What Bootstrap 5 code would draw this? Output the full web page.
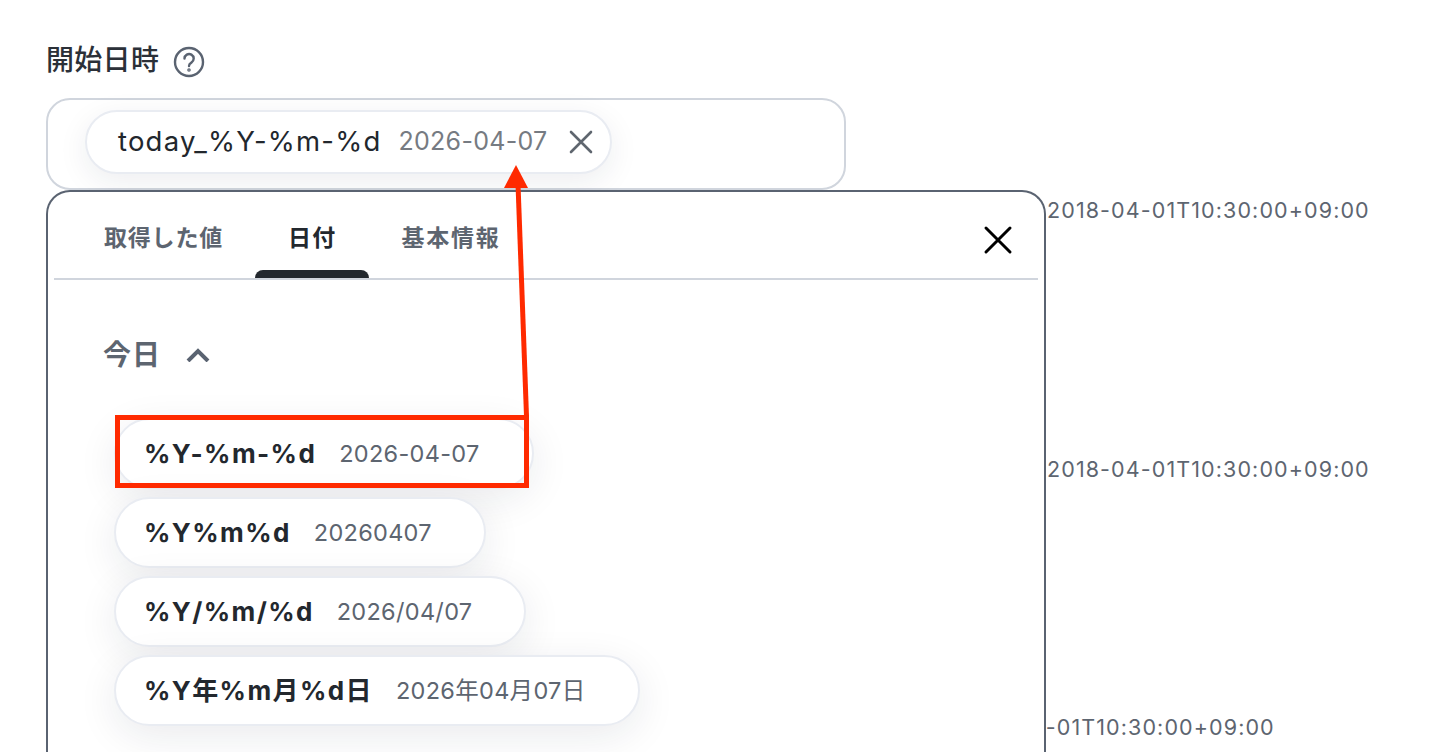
<!DOCTYPE html>
<html lang="ja">
<head>
<meta charset="utf-8">
<title>開始日時</title>
<link href="https://cdn.jsdelivr.net/npm/bootstrap@5.3.0/dist/css/bootstrap.min.css" rel="stylesheet">
<style>
html,body{height:752px;overflow:hidden;background:#fff}
body{font-family:Inter,"Noto Sans CJK JP",sans-serif;color:#23282e;position:relative}
.stage{padding:43px 0 0 46px}
.fld-label{font-size:28px;line-height:34px;letter-spacing:.3px;font-weight:500;color:#2b3038;height:34px}
.help-ic{width:32px;height:32px;margin:4px 0 0 14px;flex:none}
.tok-box{width:800px;height:92px;margin-top:21px;border:2px solid #d0d5dd;border-radius:24px;padding:10px 0 0 37px}
.tok{height:64px;border:2px solid #e9ecf2;border-radius:32px;background:#fff;box-shadow:0 8px 30px rgba(30,40,60,.08);padding:0 20px 0 31px;width:527px;white-space:nowrap}
.tok-name{font-size:27.5px;letter-spacing:1.2px;color:#22272d}
.tok-val{font-size:25px;letter-spacing:.3px;color:#767b82;margin-left:17px}
.tok-x{width:26px;height:26px;margin-left:20px;flex:none}
.under{margin-left:1047px;font-size:21.5px;letter-spacing:1.1px;color:#5d6570;line-height:26px;white-space:nowrap}
.under div{height:258.5px;padding-top:7px}
.under .third{margin-left:-95px;height:auto}
.picker{position:absolute;left:46px;top:190px;width:1000px;height:562px;background:#fff;border:2px solid #5a6371;border-bottom:0;border-radius:24px 24px 0 0}
.pick-tabs{height:88px;margin:0 6px;border-bottom:2px solid #d0d5dd;padding-left:50px;gap:65px}
.pick-tab{font-size:23px;letter-spacing:1.2px;font-weight:600;color:#5d6570;line-height:30px;padding-top:31px;height:86px;position:relative}
.pick-tab.tab-first{letter-spacing:.8px}
.pick-tab.tab-last{letter-spacing:1.8px}
.pick-tab.on{color:#23282e}
.pick-tab.on::after{content:"";position:absolute;left:-33px;right:-33px;bottom:0;height:8px;background:#23282e;border-radius:8px 8px 0 0}
.pick-close{position:absolute;right:30px;top:32px;width:32px;height:32px}
.grp{padding:58px 0 0 55px;gap:25px;font-size:28px;letter-spacing:1px;font-weight:600;color:#5d6570;line-height:34px}
.opts{padding:46px 0 0 66px;gap:8px}
.opt{height:71px;width:max-content;background:#fff;border:2px solid #e9ecf2;border-radius:36px;box-shadow:0 10px 40px rgba(20,30,50,.09);padding:0 52px 0 28px;white-space:nowrap}
.opt b{font-size:26px;font-weight:700;letter-spacing:1.4px;color:#23282e}
.opt span{font-size:23.5px;letter-spacing:.3px;color:#5d6570;margin-left:23px}
.ann{position:absolute;left:0;top:0;width:1454px;height:752px;pointer-events:none}
</style>
</head>
<body>
<div class="stage">
  <div class="fld-label d-flex align-items-center">開始日時
    <svg class="help-ic" viewBox="0 0 32 32" fill="none" stroke="#5a6371" stroke-width="2.4" stroke-linecap="round"><circle cx="16" cy="16" r="14"/><path d="M11.5 12.6a4.6 4.6 0 1 1 6.9 4c-1.6.9-2.4 1.800-2.400 3.400"/><circle cx="16" cy="24" r=".6" fill="#5a6371"/></svg>
  </div>
  <div class="tok-box">
    <div class="tok d-flex align-items-center">
      <span class="tok-name">today_%Y-%m-%d</span>
      <span class="tok-val">2026-04-07</span>
      <svg class="tok-x" viewBox="0 0 26 26" fill="none" stroke="#5f666f" stroke-width="2.600" stroke-linecap="round"><path d="M3 3l20 20M23 3L3 23"/></svg>
    </div>
  </div>
</div>
<div class="under">
  <div>2018-04-01T10:30:00+09:00</div>
  <div>2018-04-01T10:30:00+09:00</div>
  <div class="third">2018-04-01T10:30:00+09:00</div>
</div>
<div class="picker">
  <div class="pick-tabs d-flex">
    <div class="pick-tab tab-first">取得した値</div>
    <div class="pick-tab on">日付</div>
    <div class="pick-tab tab-last">基本情報</div>
  </div>
  <svg class="pick-close" viewBox="0 0 32 32" fill="none" stroke="#000" stroke-width="3" stroke-linecap="round"><path d="M4 4l24 24M28 4L4 28"/></svg>
  <div class="grp d-flex align-items-center">今日
    <svg width="24" height="14" viewBox="0 0 24 14" fill="none" stroke="#5a6371" stroke-width="4" stroke-linejoin="miter"><path d="M2 13l10-10 10 10"/></svg>
  </div>
  <div class="opts d-flex flex-column">
    <div class="opt d-flex align-items-center"><b>%Y-%m-%d</b><span>2026-04-07</span></div>
    <div class="opt d-flex align-items-center"><b>%Y%m%d</b><span>20260407</span></div>
    <div class="opt d-flex align-items-center"><b>%Y/%m/%d</b><span>2026/04/07</span></div>
    <div class="opt d-flex align-items-center"><b>%Y年%m月%d日</b><span>2026年04月07日</span></div>
  </div>
</div>
<svg class="ann" viewBox="0 0 1454 752" fill="none">
  <rect x="117.500" y="417.500" width="409" height="68" stroke="#ff2a00" stroke-width="5"/>
  <path d="M526.500 416L518 184" stroke="#ff2a00" stroke-width="5"/>
  <polygon points="516,165 504,188 528,188" fill="#ff2a00"/>
</svg>
</body>
</html>
